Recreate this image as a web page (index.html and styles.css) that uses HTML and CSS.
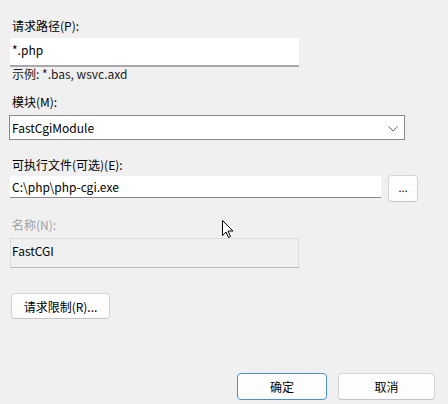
FILE: index.html
```html
<!DOCTYPE html>
<html lang="zh-CN">
<head>
<meta charset="utf-8">
<link rel="stylesheet" href="styles.css">
</head>
<body>
<div class="dialog">
  <div class="label l-path">请求路径(P):</div>
  <div class="field f-path">*.php</div>
  <div class="hint">示例: *.bas, wsvc.axd</div>

  <div class="label l-module">模块(M):</div>
  <div class="select">
    <span>FastCgiModule</span>
    <svg class="chev" width="10" height="6" viewBox="0 0 10 6"><path d="M0.5 0.5 L5 5 L9.5 0.5" fill="none" stroke="#606060" stroke-width="1"/></svg>
  </div>

  <div class="label l-exe">可执行文件(可选)(E):</div>
  <div class="exe-row">
    <div class="field f-exe">C:\php\php-cgi.exe</div>
    <div class="btn btn-browse">...</div>
  </div>

  <div class="label l-name disabled">名称(N):</div>
  <div class="field f-name">FastCGI</div>

  <div class="btn btn-limit">请求限制(R)...</div>

  <div class="actions">
    <div class="btn btn-ok">确定</div>
    <div class="btn btn-cancel">取消</div>
  </div>

  <svg class="cursor" width="13" height="19" viewBox="0 0 13 19"><path d="M0.5 0.5 L0.5 15.5 L4 12 L6.5 17.5 L8.5 16.5 L6 11 L11 11 Z" fill="#ffffff" stroke="#000" stroke-width="1" stroke-linejoin="round"/></svg>
</div>
</body>
</html>
```
FILE: styles.css
```css
html, body {
  margin: 0;
  padding: 0;
  background: #f0f0f0;
}
body {
  font-family: "Microsoft YaHei UI", "Noto Sans CJK SC", "Noto Sans", sans-serif;
  font-size: 12px;
  color: #000;
}
.dialog {
  position: relative;
  width: 448px;
  height: 404px;
  padding: 18px 0 0 10px;
  box-sizing: border-box;
  display: flex;
  flex-direction: column;
  align-items: flex-start;
}
.label {
  line-height: 16px;
  height: 16px;
  padding-left: 2px;
}
.disabled { color: #a0a0a0; }
.field {
  background: #fff;
  box-sizing: border-box;
  padding-left: 2px;
}
.f-path {
  margin-top: 4px;
  width: 289px;
  height: 29px;
  line-height: 24px;
  border-bottom: 2px solid #a8a8a8;
}
.hint {
  margin-top: 0;
  line-height: 14px;
  height: 14px;
  padding-left: 2px;
  color: #1a1a1a;
}
.l-module { margin-top: 13px; }
.select {
  margin-top: 5px;
  margin-left: -1px;
  width: 396px;
  height: 25px;
  box-sizing: border-box;
  border: 1px solid #8a8a8a;
  background: #fff;
  display: flex;
  align-items: center;
  justify-content: space-between;
  padding: 0 6px 0 2px;
}
.chev { margin-top: 2px; }
.l-exe { margin-top: 17px; }
.exe-row {
  margin-top: 2px;
  display: flex;
  align-items: flex-start;
  gap: 7px;
}
.f-exe {
  margin-top: 1px;
  width: 371px;
  height: 22px;
  line-height: 21px;
  border-bottom: 1px solid #8a8a8a;
}
.btn {
  box-sizing: border-box;
  background: #fdfdfd;
  border: 1px solid #d4d4d4;
  border-bottom-color: #c4c4c4;
  border-radius: 4px;
  display: flex;
  align-items: center;
  justify-content: center;
}
.btn-browse {
  width: 30px;
  height: 27px;
  font-size: 11px;
  padding-bottom: 3px;
}
.l-name { margin-top: 15px; }
.f-name {
  margin-top: 5px;
  width: 289px;
  height: 30px;
  line-height: 24px;
  background: #f0f0f0;
  border: 1px solid #dadada;
  border-bottom-color: #b8b8b8;
  padding-left: 1px;
}
.btn-limit {
  margin-top: 25px;
  margin-left: 1px;
  width: 99px;
  height: 26px;
}
.actions {
  margin-top: 54px;
  margin-left: 227px;
  display: flex;
  gap: 11px;
}
.btn-ok {
  width: 90px;
  height: 27px;
  border: 1px solid #4a8fd9;
}
.btn-cancel {
  width: 97px;
  height: 27px;
}
.cursor {
  position: absolute;
  left: 222px;
  top: 220px;
}
```
